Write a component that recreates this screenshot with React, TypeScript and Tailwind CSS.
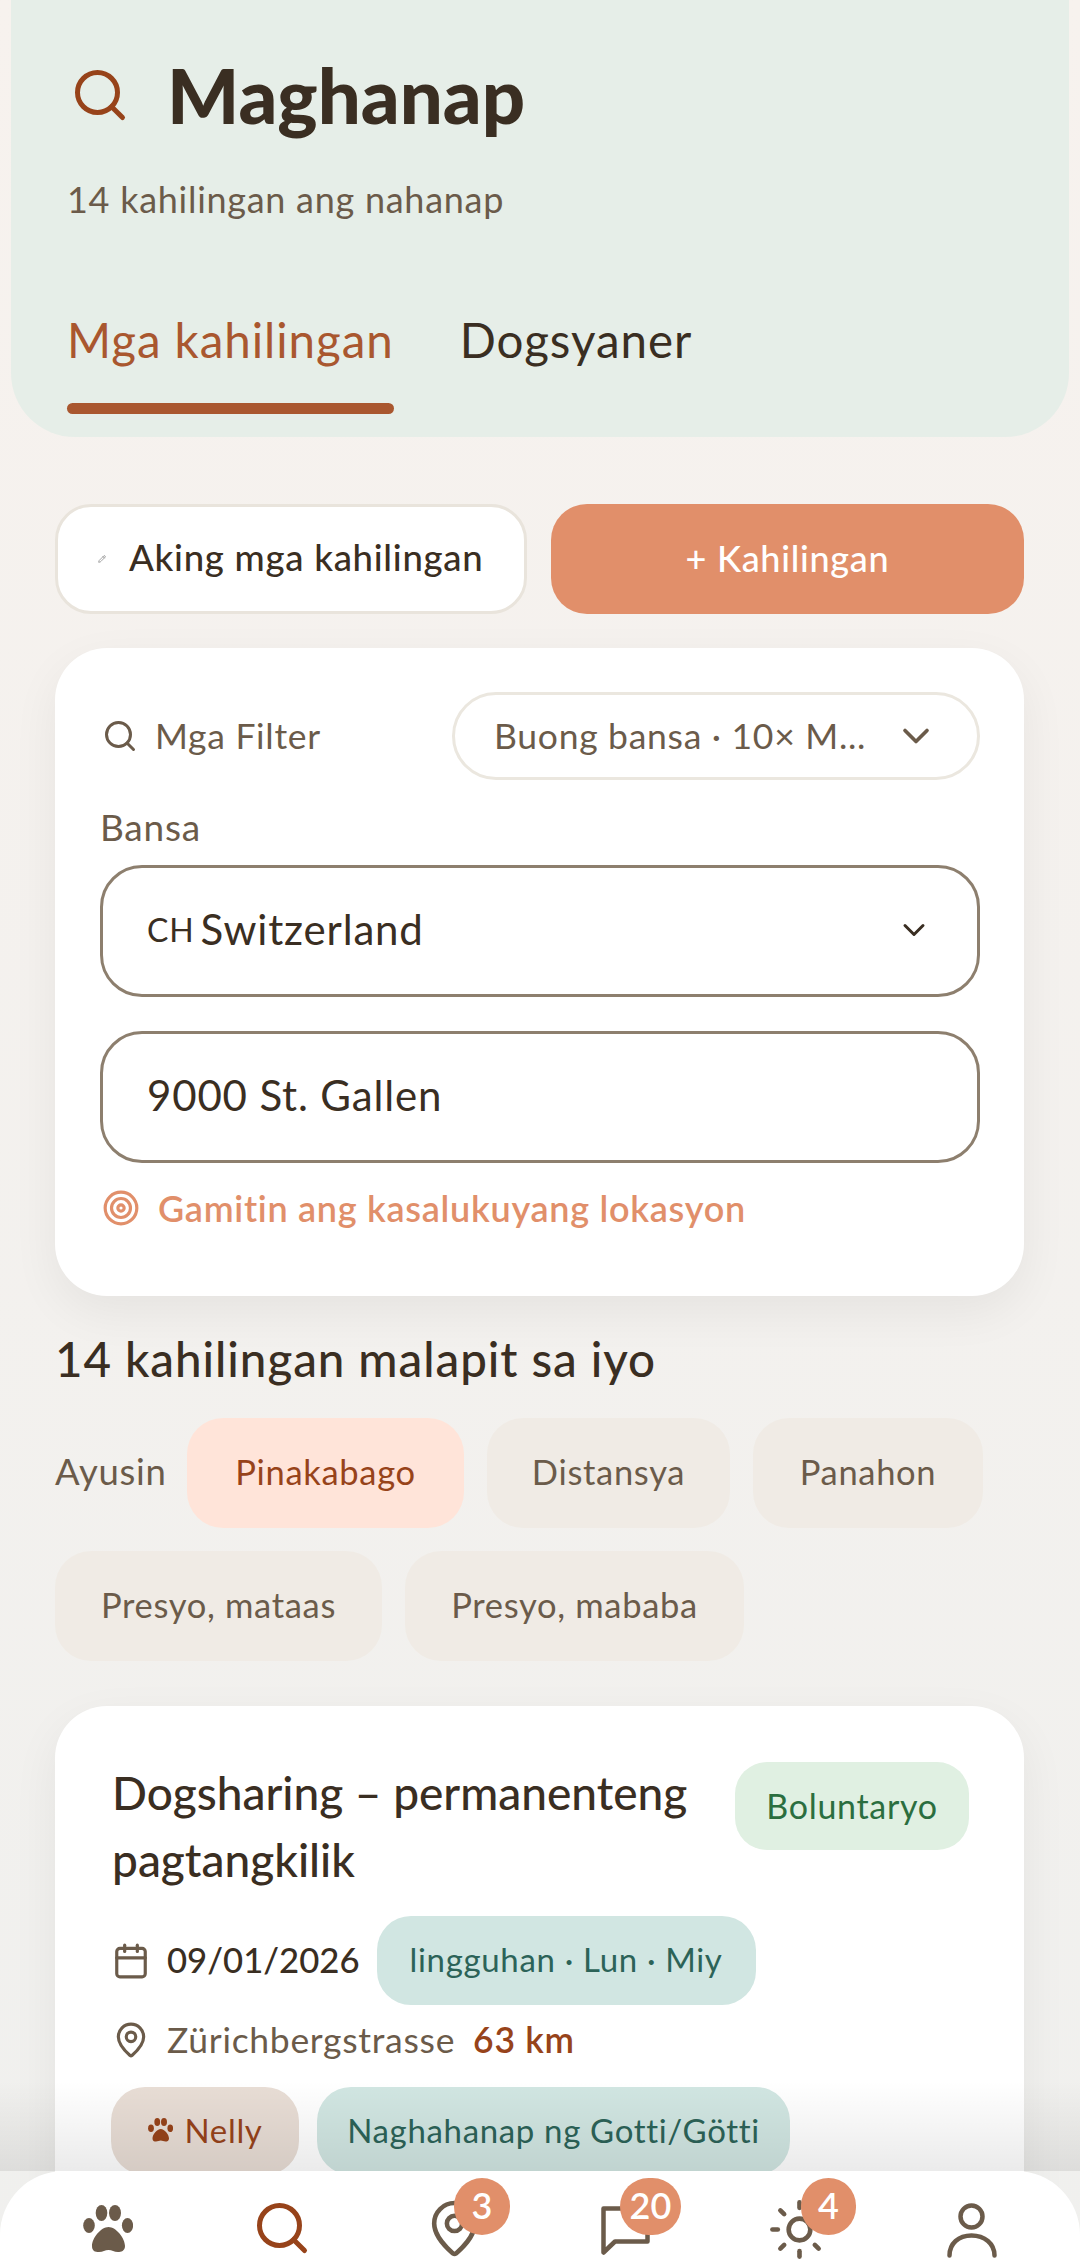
import { Calendar, ChevronDown, MapPin, Pencil, Search, Sun, Target } from "lucide-react";

const SORTS_TOP = [
  { label: "Distansya", width: "w-[243px]" },
  { label: "Panahon", width: "w-[230px]" },
];

function Paw({ className }: { className: string }) {
  return (
    <svg viewBox="0 0 50 48" fill="currentColor" className={className}>
      <ellipse cx="6" cy="20.5" rx="5.8" ry="7.5" />
      <ellipse cx="18.5" cy="8" rx="5.8" ry="8" />
      <ellipse cx="32" cy="8" rx="6" ry="8" />
      <ellipse cx="44.5" cy="20.5" rx="5.6" ry="7.5" />
      <path d="M25.5 22C33 22 42 33 42 41C42 46 38 47 35 47C31 47 29 45 25.5 45C22 45 20 47 16 47C12 47 9 46 9 41C9 33 18 22 25.5 22Z" />
    </svg>
  );
}

function Chip({ label, className }: { label: string; className: string }) {
  return (
    <div className={`flex h-[110px] items-center justify-center rounded-[36px] pb-[2px] text-[34.5px] tracking-[0.02em] ${className}`}>
      {label}
    </div>
  );
}

function Badge({ value, className }: { value: string; className: string }) {
  return (
    <span
      className={`absolute top-[7px] flex h-[57px] items-center justify-center rounded-full bg-[#e18f6a] pb-[3px] text-[36px] font-semibold text-white ${className}`}
    >
      {value}
    </span>
  );
}

function BottomNav() {
  return (
    <>
      <div className="pointer-events-none absolute inset-x-0 bottom-[97px] h-[90px] bg-gradient-to-b from-transparent to-black/[0.08]" />
      <nav className="absolute inset-x-0 bottom-0 h-[97px] rounded-t-[64px] bg-white">
        <Paw className="absolute left-[83px] top-[34px] h-[48px] w-[50px] text-[#6b5b4a]" />
        <Search className="absolute left-[252px] top-[27px] h-[60px] w-[60px] text-[#97431a]" strokeWidth={2} />
        <MapPin className="absolute left-[424px] top-[27px] h-[61px] w-[61px] text-[#6b5b4a]" strokeWidth={1.8} />
        <Badge value="3" className="left-[454px] w-[56px]" />
        <svg
          viewBox="0 0 49 49"
          className="absolute left-[601px] top-[35px] h-[49px] w-[49px] text-[#6b5b4a]"
          fill="none"
          stroke="currentColor"
          strokeWidth={4.5}
          strokeLinejoin="round"
        >
          <path d="M2.5 2.5h44v33H14l-11.500 11z" />
        </svg>
        <Badge value="20" className="left-[620px] w-[61px]" />
        <Sun className="absolute left-[767px] top-[26px] h-[65px] w-[65px] text-[#6b5b4a]" strokeWidth={1.7} />
        <Badge value="4" className="left-[801px] w-[55px]" />
        <svg
          viewBox="0 0 50 55"
          className="absolute left-[947px] top-[32px] h-[55px] w-[50px] text-[#6b5b4a]"
          fill="none"
          stroke="currentColor"
          strokeWidth={4.5}
          strokeLinecap="round"
        >
          <circle cx="24.500" cy="13.500" r="11" />
          <path d="M2.500 52.500c0-12 9-20 22-20s23 8 23 20" />
        </svg>
      </nav>
    </>
  );
}

export default function App() {
  return (
    <div className="relative h-[2268px] w-[1080px] overflow-hidden bg-gradient-to-b from-[#f7f2ee] to-[#f0f0ee] font-['Lato',sans-serif] text-[#3a2e22]">
      <header className="mx-[11px] h-[437px] rounded-b-[64px] bg-[#e6eee8] pl-[56px]">
        <div className="flex items-center pt-[57px]">
          <Search className="ml-[3px] h-[60px] w-[60px] text-[#97431a]" strokeWidth={2} />
          <h1 className="ml-[37px] text-[76px] font-black leading-[76px]">Maghanap</h1>
        </div>
        <p className="mt-[42px] text-[36px] leading-[48px] tracking-[0.02em] text-[#6b5b4a]">14 kahilingan ang nahanap</p>
        <div className="mt-[87px] flex gap-[66px] text-[47.5px] leading-[60px] tracking-[0.02em]">
          <div>
            <span className="text-[#a9572f]">Mga kahilingan</span>
            <div className="mt-[33px] h-[11px] rounded-full bg-[#a9572f]" />
          </div>
          <span>Dogsyaner</span>
        </div>
      </header>

      <main className="pl-[55px] pr-[56px]">
        <div className="mt-[67px] flex gap-[24px]">
          <button className="flex h-[110px] w-[472px] items-center rounded-[36px] border-[3px] border-[#e9e4dc] bg-white pb-[3px] pl-[40px] text-[36.5px] font-medium tracking-[0.02em]">
            <Pencil className="mt-[3px] h-[8px] w-[8px] text-[#777]" />
            <span className="ml-[23px]">Aking mga kahilingan</span>
          </button>
          <button className="h-[110px] flex-1 rounded-[36px] bg-[#e18f6a] pb-[3px] text-[36px] font-medium tracking-[0.02em] text-white">
            + Kahilingan
          </button>
        </div>

        <section className="mt-[34px] h-[648px] rounded-[52px] bg-white pl-[45px] pr-[44px] pt-[44px] shadow-[0_16px_48px_rgba(0,0,0,0.06)]">
          <div className="flex items-center justify-between">
            <div className="flex items-center text-[35.5px] tracking-[0.02em] text-[#6b5b4a]">
              <Search className="ml-[2px] h-[36px] w-[36px]" strokeWidth={2} />
              <span className="ml-[17px]">Mga Filter</span>
            </div>
            <div className="flex h-[88px] w-[528px] items-center rounded-full border-[3px] border-[#ebe7df] pl-[39px] text-[35.5px] tracking-[0.02em] text-[#6b5b4a]">
              <span>Buong bansa · 10× M...</span>
              <ChevronDown className="ml-auto mr-[39px] h-[44px] w-[44px]" strokeWidth={2} />
            </div>
          </div>
          <p className="mt-[25px] text-[37px] leading-[44px] tracking-[0.02em] text-[#6b5b4a]">Bansa</p>
          <div className="mt-[16px] flex h-[132px] items-center rounded-[42px] border-[3px] border-[#8d7f6e] pb-[3px] pl-[44px] text-[42px] tracking-[0.02em]">
            <span className="text-[32px]">CH</span>
            <span className="ml-[6px]">Switzerland</span>
            <ChevronDown className="ml-auto mr-[45px] h-[36px] w-[36px]" strokeWidth={2} />
          </div>
          <div className="mt-[34px] flex h-[132px] items-center rounded-[42px] border-[3px] border-[#8d7f6e] pb-[3px] pl-[44px] text-[42px] tracking-[0.02em]">
            9000 St. Gallen
          </div>
          <div className="mt-[18px] flex items-center text-[36px] font-semibold tracking-[0.02em] text-[#e18f6a]">
            <Target className="ml-[2px] h-[38px] w-[38px]" strokeWidth={2} />
            <span className="ml-[18px]">Gamitin ang kasalukuyang lokasyon</span>
          </div>
        </section>

        <h2 className="mt-[34px] text-[47.5px] font-medium leading-[58px] tracking-[0.02em]">14 kahilingan malapit sa iyo</h2>

        <div className="mt-[30px] flex items-center">
          <span className="pb-[3px] text-[36.5px] tracking-[0.02em] text-[#6b5b4a]">Ayusin</span>
          <Chip label="Pinakabago" className="ml-auto w-[277px] bg-[#ffe4d9] text-[#97431a]" />
          {SORTS_TOP.map((s) => (
            <Chip key={s.label} label={s.label} className={`ml-[23px] bg-[#f0ebe5] text-[#6b5b4a] ${s.width}`} />
          ))}
          <div className="w-[41px]" />
        </div>
        <div className="mt-[23px] flex gap-[23px]">
          <Chip label="Presyo, mataas" className="w-[327px] bg-[#f0ebe5] text-[#6b5b4a]" />
          <Chip label="Presyo, mababa" className="w-[339px] bg-[#f0ebe5] text-[#6b5b4a]" />
        </div>

        <article className="mt-[45px] h-[700px] rounded-[52px] bg-white pl-[57px] pr-[56px] pt-[56px] shadow-[0_16px_48px_rgba(0,0,0,0.06)]">
          <div className="flex items-start justify-between">
            <h3 className="-mt-[3px] mb-[3px] w-[600px] text-[46px] font-medium leading-[67px]">Dogsharing – permanenteng pagtangkilik</h3>
            <span className="-mr-[1px] flex h-[88px] w-[234px] items-center justify-center rounded-[32px] bg-[#e0f0e2] pb-[2px] text-[34px] tracking-[0.02em] text-[#2b6e3f]">
              Boluntaryo
            </span>
          </div>
          <div className="mt-[20px] flex items-center">
            <Calendar className="h-[38px] w-[38px] text-[#6b5b4a]" strokeWidth={2} />
            <span className="ml-[17px] text-[34.7px] font-medium">09/01/2026</span>
            <span className="ml-[17px] flex h-[89px] w-[379px] items-center justify-center rounded-[34px] bg-[#d1e6e2] pb-[2px] text-[33px] tracking-[0.02em] text-[#2c6358]">
              lingguhan · Lun · Miy
            </span>
          </div>
          <div className="mt-[8px] flex items-center text-[35.500px] tracking-[0.02em]">
            <MapPin className="h-[38px] w-[38px] text-[#6b5b4a]" strokeWidth={2} />
            <span className="ml-[17px] text-[#6b5b4a]">Zürichbergstrasse</span>
            <span className="ml-[18px] font-semibold text-[#97431a]">63 km</span>
          </div>
          <div className="mt-[21px] flex gap-[18px]">
            <span className="-ml-[1px] flex h-[88px] w-[188px] items-center justify-center rounded-[34px] bg-[#e8ddd5] pb-[2px] text-[33px] tracking-[0.02em] text-[#97431a]">
              <Paw className="mr-[12px] h-[24px] w-[25px]" />
              Nelly
            </span>
            <span className="flex h-[88px] w-[473px] items-center justify-center rounded-[34px] bg-[#d1e6e2] pb-[2px] text-[33px] tracking-[0.02em] text-[#2c6358]">
              Naghahanap ng Gotti/Götti
            </span>
          </div>
        </article>
      </main>

      <BottomNav />
    </div>
  );
}
